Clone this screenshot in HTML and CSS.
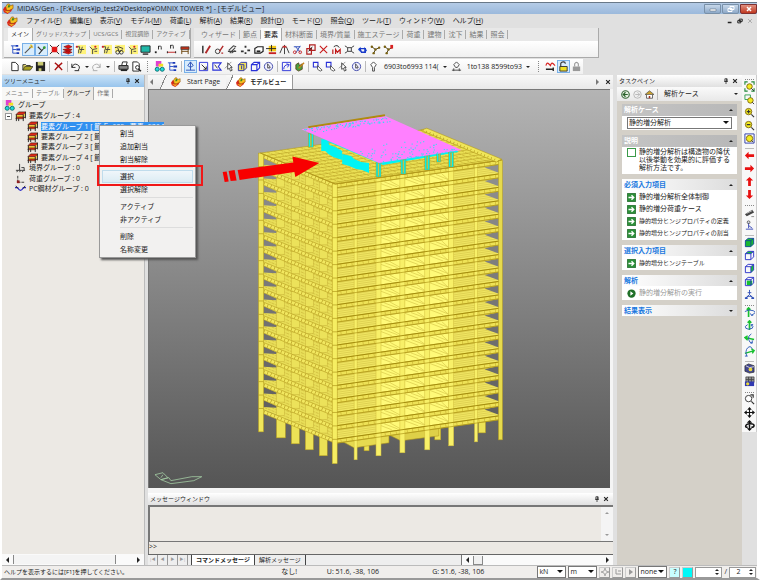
FILE: index.html
```html
<!DOCTYPE html>
<html lang="ja">
<head>
	<meta charset="UTF-8">
	<title>MIDAS/Gen</title>
	<link rel="stylesheet" href="styles.css">
</head>
<body>
<svg class="sprite" aria-hidden="true">
	<symbol id="logo" viewBox="0 0 12 12"><path d="M0 7l2-3 2 0 0 3 3-1 4-1-2 4-4 3-4-2z" fill="#d8281c"/><path d="M3 4l2-3 2 0 1 2 3-1 0 4-4 2-3 0z" fill="#f8c020" stroke="#8a4a08" stroke-width=".6"/><path d="M1 8l3 1 4 0-3 2z" fill="#f0c020"/><path d="M6 2l2 1-1 2-2 0z" fill="#3a8a20"/></symbol>
	<symbol id="pin" viewBox="0 0 8 8"><path d="M2.500 1h3v3.500h-3zM1.500 4.500h5M4 4.500V8" fill="none" stroke="#222"/><path d="M4.500 1v3" stroke="#222"/></symbol>
	<symbol id="close" viewBox="0 0 8 8"><path d="M1.500 1.500l5 5M6.500 1.500l-5 5" stroke="#222" stroke-width="1.500"/></symbol>
	<symbol id="tree" viewBox="0 0 12 12"><path d="M1 2h5M3 2v8h4M3 6h4" stroke="#2a50c8" fill="none"/><path d="M6 2h3M7 6h4M7 10h3" stroke="#1838b8" stroke-width="2"/></symbol>
	<symbol id="node" viewBox="0 0 12 12"><path d="M2 10l8-8" stroke="#555" stroke-width="1.200"/><path d="M8 1l2 1M9 4l2-1M7 3l1 1" stroke="#e8c020" stroke-width="1.500"/></symbol>
	<symbol id="elem" viewBox="0 0 12 12"><path d="M3 11l7-8M2 3l4 4" stroke="#333" stroke-width="1.200"/><circle cx="9" cy="4" r="1.500" fill="#38a038"/></symbol>
	<symbol id="redbox" viewBox="0 0 12 12"><path d="M1 1l10 10M11 1L1 11" stroke="#222"/><path d="M3 3h6v6H3z" fill="#e01818"/></symbol>
	<symbol id="redstack" viewBox="0 0 12 12"><path d="M2 3l5-2 4 2-4 2zM1 6l5-1 5 1-4 3zM1 9l5-2 5 2-4 2z" fill="#e01010" stroke="#701010" stroke-width=".6"/></symbol>
	<symbol id="yel" viewBox="0 0 12 12"><path d="M3 1h9v10H3z" fill="#fff37a"/><path d="M1 3h4v3h5M4 6v4M8 3l-2 7" stroke="#444" fill="none"/><path d="M1 2h2v2H1z" fill="#d02020"/></symbol>
	<symbol id="yel2" viewBox="0 0 12 12"><path d="M3 1h9v10H3z" fill="#fff37a"/><path d="M2 3l3 3 5-1M5 6v5M7 8h3" stroke="#444" fill="none"/><circle cx="8" cy="3" r="1.200" fill="#d02020"/></symbol>
	<symbol id="yel3" viewBox="0 0 12 12"><path d="M1 1h11v8H1z" fill="#fff37a"/><path d="M1 4l4-1 5 2M4 4l2 5 3-3" stroke="#333" fill="none"/><circle cx="4" cy="9" r="2" fill="none" stroke="#333"/><circle cx="8" cy="9" r="2" fill="none" stroke="#333"/></symbol>
	<symbol id="screen" viewBox="0 0 12 12"><path d="M1 2h10v7H1z" fill="#20b8a8" stroke="#222"/><path d="M3 11h6" stroke="#222" stroke-width="1.500"/></symbol>
	<symbol id="num" viewBox="0 0 12 12"><path d="M6 6V2M6 3q3-2 3 1v2" stroke="#222" fill="none"/><path d="M2 8h2v2H2z" fill="#222"/></symbol>
	<symbol id="num2" viewBox="0 0 12 12"><path d="M5 5V1M5 2q3-2 3 1v2" stroke="#222" fill="none"/><path d="M1 9h10" stroke="#c02020"/><path d="M1 8h1v2H1zM10 8h1v2h-1z" fill="#222"/></symbol>
	<symbol id="table" viewBox="0 0 12 12"><path d="M2 3h9v3H2z" fill="#b83018" stroke="#333" stroke-width=".7"/><path d="M3 6v5M10 6v5M3 8h7" stroke="#684008" fill="none"/></symbol>
	<symbol id="pen" viewBox="0 0 12 12"><path d="M2 2v8" stroke="#222" stroke-width="1.500"/><path d="M5 10l5-8" stroke="#b02828" stroke-width="2"/></symbol>
	<symbol id="pencil" viewBox="0 0 12 12"><circle cx="4" cy="8" r="2.500" fill="none" stroke="#333"/><path d="M6 8l4-6M8 10h2" stroke="#b02828" stroke-width="1.500"/></symbol>
	<symbol id="hatch" viewBox="0 0 12 12"><path d="M2 7l5-5 3 1M3 10l6-6M5 10l4-3M1 8h9" stroke="#444" fill="none" stroke-width="1.200"/></symbol>
	<symbol id="dots" viewBox="0 0 12 12"><path d="M1 7h3v2H1zM5 2h2v2H5zM8 6h3v2H8zM5 9h2v2H5z" fill="#333"/></symbol>
	<symbol id="box" viewBox="0 0 12 12"><path d="M2 5l3-2h6v5l-3 2H2z" fill="#fff" stroke="#222" stroke-width="1.300"/><path d="M4 7h4v2H4z" fill="#222"/></symbol>
	<symbol id="yband" viewBox="0 0 12 12"><path d="M3 2h8v6H3z" fill="#f4c818"/><path d="M0 5h11M6 1v7" stroke="#222"/><path d="M3 9h8v2H3z" fill="#c82020"/></symbol>
	<symbol id="mirror" viewBox="0 0 12 12"><path d="M6 1v10M4 3L1 10M8 3l3 7" stroke="#333"/><path d="M4 2h4v2H4z" fill="#c83030"/></symbol>
	<symbol id="scissor" viewBox="0 0 12 12"><path d="M2 3h7M9 2l-5 8M4 3l5 6" stroke="#2848b8" fill="none"/><circle cx="3" cy="9" r="1.500" fill="none" stroke="#c82828"/><circle cx="9" cy="9" r="1.500" fill="none" stroke="#c82828"/></symbol>
	<symbol id="copy" viewBox="0 0 12 12"><path d="M2 5h5v6H2zM5 1h6v6H5z" fill="none" stroke="#b02020" stroke-width="1.300"/><path d="M4 8l4-5" stroke="#222"/></symbol>
	<symbol id="cross" viewBox="0 0 12 12"><path d="M2 2l8 8M10 2l-8 8" stroke="#c81818" stroke-width="1.200"/></symbol>
	<symbol id="im" viewBox="0 0 12 12"><path d="M2 6v5M5 11V6l2 3 3-3v5" stroke="#c01818" fill="none" stroke-width="1.300"/><path d="M3 3q4-3 6 1" stroke="#222" fill="none"/></symbol>
	<symbol id="explode" viewBox="0 0 12 12"><path d="M1 2l3 2M11 2L8 4M1 10l3-2M11 10L8 8M4 4h4v4H4z" stroke="#333" fill="none"/></symbol>
	<symbol id="swap" viewBox="0 0 12 12"><path d="M1 6l3-3v6zM11 7L8 3v7z" fill="#2858d8"/><path d="M3 5h6v4H5z" fill="none" stroke="#1838c8" stroke-width="1.500"/></symbol>
	<symbol id="chain" viewBox="0 0 12 12"><path d="M2 3l4 3 4-2M6 6l-2 4" stroke="#443810" fill="none"/><circle cx="2" cy="3" r="1.300" fill="#786010"/><circle cx="6" cy="6" r="1.300" fill="#786010"/><circle cx="10" cy="4" r="1.300" fill="#786010"/><circle cx="4" cy="10" r="1.300" fill="#786010"/></symbol>
	<symbol id="chain2" viewBox="0 0 12 12"><path d="M2 3l4 3 4-2M6 6l-2 4" stroke="#443810" fill="none"/><circle cx="2" cy="3" r="1.300" fill="#786010"/><circle cx="6" cy="6" r="1.300" fill="#786010"/><circle cx="4" cy="10" r="1.300" fill="#786010"/><path d="M8 1h3v4H8z" fill="#d82020"/></symbol>
	<symbol id="file" viewBox="0 0 12 12"><path d="M3 1.500h4l3 3v6H3z" fill="#fff" stroke="#222"/></symbol>
	<symbol id="open" viewBox="0 0 12 12"><path d="M1 10V4h3l1 1h4v2" fill="#fff37a" stroke="#222"/><path d="M1 10l2-4h9l-3 4z" fill="#a8a020" stroke="#222" stroke-width=".7"/></symbol>
	<symbol id="save" viewBox="0 0 12 12"><path d="M1 1h10v10H1z" fill="#222"/><path d="M3 1h6v4H3zM4 8h3v3H4z" fill="#c8c870"/></symbol>
	<symbol id="del" viewBox="0 0 12 12"><path d="M2 2q3 2 8 8M10 2Q6 5 2 10" stroke="#a81010" fill="none" stroke-width="1.500"/></symbol>
	<symbol id="undo" viewBox="0 0 12 12"><path d="M2 3v4h4M2 7q2-5 6-3t1 6M5 10.500h5" stroke="#222" fill="none"/></symbol>
	<symbol id="redo" viewBox="0 0 12 12"><path d="M10 3v4H6M10 7Q8 2 4 4T3 10M2 10.500h5" stroke="#aaa" fill="none"/></symbol>
	<symbol id="print" viewBox="0 0 12 12"><path d="M4 5l1-4h5L9 5z" fill="#fff" stroke="#222"/><path d="M1 5h10v4H1z" fill="#888" stroke="#222"/><path d="M3 9h7v2H3z" fill="#222"/></symbol>
	<symbol id="preview" viewBox="0 0 12 12"><path d="M2 1h5l2 2v8H2z" fill="#fff" stroke="#222"/><circle cx="7" cy="7" r="2" fill="#fff" stroke="#222"/><path d="M8 9l3 2" stroke="#222" stroke-width="1.500"/></symbol>
	<symbol id="group" viewBox="0 0 12 12"><path d="M2 0h6v6H2z" fill="#e040d0"/><path d="M5 3h5v3H5z" fill="#f0e020"/><circle cx="3.500" cy="9" r="2.200" fill="#20d8d8" stroke="#087070"/><circle cx="9" cy="9" r="2.200" fill="#20d8d8" stroke="#087070"/></symbol>
	<symbol id="axis" viewBox="0 0 12 12"><path d="M6 1v9M1 10h10M3 5l3-4 3 4-3 2z" stroke="#2a50b8" fill="none"/></symbol>
	<symbol id="selwin" viewBox="0 0 12 12"><path d="M1.500 1.500h9v9h-9z" fill="none" stroke="#2830d8"/><path d="M4 4l5 5M9 6v3H6" stroke="#222" fill="none"/></symbol>
	<symbol id="selprev" viewBox="0 0 12 12"><path d="M1.500 1.500h9v9h-9z" fill="none" stroke="#2830d8"/><path d="M3 9q0-5 5-5M6 3l3 1-2 3" stroke="#2830d8" fill="none"/></symbol>
	<symbol id="selpoly" viewBox="0 0 12 12"><path d="M2 10V2h9L8 6l3 4z" fill="none" stroke="#2830d8" stroke-width="1.200"/><path d="M4 4l3 4" stroke="#333"/></symbol>
	<symbol id="arrow" viewBox="0 0 12 12"><path d="M4 2l5 5-2 0 2 3-2 1-1-3-2 1z" fill="#fff" stroke="#333" stroke-width=".9"/><path d="M1 8l7-7" stroke="#666" stroke-width=".7"/></symbol>
	<symbol id="cube" viewBox="0 0 12 12"><path d="M1.500 4l3-2.500h6v6l-3 3h-6zM1.500 4h6v6.500M7.500 4l3-2.500" fill="none" stroke="#2830d8" stroke-width="1.200"/></symbol>
	<symbol id="ycube" viewBox="0 0 12 12"><path d="M1.500 4l3-2.500h6v6l-3 3h-6z" fill="#f0e058" stroke="#2830a8"/><path d="M1.500 4h6v6M5 5v4" stroke="#2830a8" fill="none"/></symbol>
	<symbol id="globe" viewBox="0 0 12 12"><circle cx="6" cy="6" r="4.500" fill="#f0f0ff" stroke="#4048a8"/><path d="M5 3l3 4-2 0 1 2M5 3v5" fill="none" stroke="#333" stroke-width=".8"/></symbol>
	<symbol id="selarrow" viewBox="0 0 12 12"><path d="M1.500 1.500h5v5h-5z" fill="none" stroke="#2830d8" stroke-width="1.200"/><path d="M6 5l5 5-2 1-3-2z" fill="#fff" stroke="#333" stroke-width=".8"/></symbol>
	<symbol id="brush" viewBox="0 0 12 12"><path d="M2 4l3-2 1 3 3-2v6l-4 2-3-2z" fill="#48a040" stroke="#503010" stroke-width=".8"/><path d="M5 8l6-6" stroke="#c88018" stroke-width="1.500"/></symbol>
	<symbol id="bulb" viewBox="0 0 12 12"><path d="M6 1l3 3-2 3v4H5V7L3 4z" fill="#fff" stroke="#444"/></symbol>
	<symbol id="bulb2" viewBox="0 0 12 12"><path d="M6 1l3 3-2 3H5L3 4zM1 10h10M3 8v3M9 8v3" fill="none" stroke="#444"/></symbol>
	<symbol id="wave" viewBox="0 0 12 12"><path d="M1 5q1-4 3-2t2 2q1-4 3-2t2 2" stroke="#d82020" fill="none" stroke-width="1.200"/><path d="M1 9h8M9 7v4" stroke="#222" stroke-width="1.500"/></symbol>
	<symbol id="unlock" viewBox="0 0 12 12"><path d="M3 6V3q0-2 3-2 2 0 2 2" fill="none" stroke="#333" stroke-width="1.200"/><path d="M2 6h8v5H2z" fill="#f0e020" stroke="#333"/></symbol>
	<symbol id="lock" viewBox="0 0 12 12"><path d="M4 6V3q2-3 4 0v3" fill="none" stroke="#999" stroke-width="1.200"/><path d="M2 6h8v5H2z" fill="#999"/></symbol>
	<symbol id="floor" viewBox="0 0 12 12"><path d="M1 4l3-3h8L9 4z" fill="#e02818" stroke="#401808" stroke-width=".7"/><path d="M1 4.500h8v2H1zM9 4.500l3-3v2l-3 3z" fill="#f0c020"/><path d="M1 7.500l2-1h8L9 8.500H1z" fill="#e02818" stroke="#403008" stroke-width=".6"/><path d="M1.500 4v7M9 4v7M11.500 1v7M4 8v3" stroke="#222" fill="none"/></symbol>
	<symbol id="support" viewBox="0 0 12 12"><path d="M5 1v7M1 8h10M7 5h3v3M2 10l1-2M5 10l1-2M8 10l1-2" stroke="#333" fill="none"/></symbol>
	<symbol id="load" viewBox="0 0 12 12"><path d="M3 2v8M3 9h8" stroke="#333" fill="none" stroke-dasharray="3 1"/><path d="M2 7h3v3H2z" fill="#902020"/></symbol>
	<symbol id="tendon" viewBox="0 0 12 12"><path d="M0 4h3q3 6 6 0h3" stroke="#2828c8" fill="none" stroke-width="1.300"/><path d="M1 2l2 3M9 5l2-3" stroke="#222"/></symbol>
	<symbol id="zoomfit" viewBox="0 0 12 12"><path d="M1 4V1h3M8 1h3v3M11 8v3H8M4 11H1V8" stroke="#208838" fill="none" stroke-width="1.200"/><circle cx="6" cy="6" r="3" fill="#f4ec20" stroke="#806810"/><path d="M8 8l3 3" stroke="#333"/></symbol>
	<symbol id="zoomwin" viewBox="0 0 12 12"><path d="M1 1h6v5H1z" stroke="#30a050" fill="none"/><circle cx="7" cy="7" r="3" fill="#f4ec20" stroke="#806810"/><path d="M9 9l2 2" stroke="#333"/></symbol>
	<symbol id="zoomin" viewBox="0 0 12 12"><circle cx="5" cy="5" r="3.500" fill="#f4ec20" stroke="#806810"/><path d="M8 8l3 3M3 5h4M5 3v4" stroke="#333" stroke-width="1.200"/></symbol>
	<symbol id="zoomout" viewBox="0 0 12 12"><circle cx="5" cy="5" r="3.500" fill="#f4ec20" stroke="#806810"/><path d="M8 8l3 3M3 5h4" stroke="#333" stroke-width="1.200"/></symbol>
	<symbol id="zoomall" viewBox="0 0 12 12"><path d="M1 1h10v10H1z" fill="#fff" stroke="#2838a8"/><circle cx="6" cy="6" r="3.500" fill="#f4ec20" stroke="#806810"/><path d="M8 8l2 2" stroke="#333"/></symbol>
	<symbol id="left" viewBox="0 0 12 12"><path d="M1 6l4-4v2.500h6v3H5V10z" fill="#e81010"/></symbol>
	<symbol id="right" viewBox="0 0 12 12"><path d="M11 6L7 2v2.500H1v3h6V10z" fill="#e81010"/></symbol>
	<symbol id="up" viewBox="0 0 12 12"><path d="M6 1l4 4H7.500v6h-3V5H2z" fill="#e81010"/></symbol>
	<symbol id="down" viewBox="0 0 12 12"><path d="M6 11l4-4H7.500V1h-3v6H2z" fill="#e81010"/></symbol>
	<symbol id="camera" viewBox="0 0 12 12"><path d="M1 8l8-5 2 3-8 4z" fill="#444"/><path d="M3 7l6-3" stroke="#bbb"/><path d="M8 10h3v1H8z" fill="#888"/></symbol>
	<symbol id="stand" viewBox="0 0 12 12"><path d="M5 3v6M2 10h8M5 6l4 3" stroke="#3848b8" fill="none"/><circle cx="5" cy="2.500" r="1.500" fill="none" stroke="#555"/></symbol>
	<symbol id="vface" viewBox="0 0 12 12"><path d="M1.500 4l3-2.500h6v6l-3 3h-6z" fill="#18b830" stroke="#104898"/><path d="M1.500 4h6v6M7.500 4l3-2.500" stroke="#104898" fill="none"/></symbol>
	<symbol id="vtop" viewBox="0 0 12 12"><path d="M1.500 4l3-2.500h6l-3 2.500z" fill="#18c030"/><path d="M1.500 4l3-2.500h6v6l-3 3h-6zM1.500 4h6v6.500M7.500 4l3-2.500" fill="none" stroke="#2830c8"/></symbol>
	<symbol id="vside" viewBox="0 0 12 12"><path d="M7.500 4l3-2.500v6l-3 3z" fill="#18c030"/><path d="M1.500 4l3-2.500h6v6l-3 3h-6zM1.500 4h6v6.500M7.500 4l3-2.500" fill="none" stroke="#2830c8"/></symbol>
	<symbol id="vfront" viewBox="0 0 12 12"><path d="M3 5h6v5H3z" fill="#18c030"/><path d="M1.500 4l3-2.500h6v6l-3 3h-6zM1.500 4h6v6.500M7.500 4l3-2.500" fill="none" stroke="#2830c8"/></symbol>
	<symbol id="tripod" viewBox="0 0 12 12"><path d="M6 1v5M6 6l-4 4M6 6l4 4M4 4h4M3 8h6" stroke="#3050b8" fill="none"/><path d="M1 9h3v2H1zM8 9h3v2H8z" fill="#3050b8"/></symbol>
	<symbol id="rotdown" viewBox="0 0 12 12"><path d="M5 1v10M3 3l2-2 2 2" stroke="#18c030" fill="none" stroke-width="1.800"/><path d="M1 5q4-3 9-1t-2 5M7 7l1 2 2 0" stroke="#2858b8" fill="none"/></symbol>
	<symbol id="rotup" viewBox="0 0 12 12"><path d="M6 11V1M4 3l2-2 2 2" stroke="#18c030" fill="none" stroke-width="1.800"/><path d="M4 5Q0 7 2 9t7 0q2-2-1-4M8 7V5h2" stroke="#2858b8" fill="none"/></symbol>
	<symbol id="rotleft" viewBox="0 0 12 12"><path d="M1 5l10 2M4 3L1 5l3 3" stroke="#18c030" fill="none" stroke-width="1.600"/><path d="M8 1Q4 3 5 7t4 4M9 8v3H7" stroke="#2858b8" fill="none"/></symbol>
	<symbol id="rotright" viewBox="0 0 12 12"><path d="M1 8l10-3M8 3l3 2-2 3" stroke="#18c030" fill="none" stroke-width="1.600"/><path d="M3 11Q1 5 4 2t5 1M4 11H1" stroke="#2858b8" fill="none"/></symbol>
	<symbol id="render" viewBox="0 0 12 12"><path d="M1 3l4-2 6 2v7l-5 1-5-2z" fill="#444890" stroke="#222" stroke-width=".7"/><circle cx="7" cy="7" r="2" fill="#e8d838"/><path d="M2 3l4 2 5-1" stroke="#ddd" fill="none"/></symbol>
	<symbol id="render2" viewBox="0 0 12 12"><path d="M2 1h9v6H2z" fill="#999" stroke="#333" stroke-width=".7"/><path d="M5 1v6M8 1v6M2 4h9" stroke="#444"/><path d="M1 6h10v5H1z" fill="#3038b0"/><circle cx="4" cy="8.500" r="1.800" fill="#e8d838"/></symbol>
	<symbol id="magnify" viewBox="0 0 12 12"><circle cx="5" cy="5" r="3.500" fill="#fff" stroke="#333"/><path d="M8 8l3 3M7 1h3v3" stroke="#333" fill="none" stroke-width="1.300"/></symbol>
	<symbol id="move" viewBox="0 0 12 12"><path d="M6 0l2.500 3h-5zM6 12l2.500-3h-5zM0 6l3-2.500v5zM12 6L9 3.500v5z" fill="#111"/><path d="M6 2v8M2 6h8" stroke="#111" stroke-width="1.200"/></symbol>
	<symbol id="orbit" viewBox="0 0 12 12"><path d="M6 0l3 3H3zM6 12l3-3H3z" fill="#111"/><path d="M6 2v8M4 8Q1 8 2 6t5-2 4 2-3 2" stroke="#111" fill="none" stroke-width="1.600"/></symbol>
	<symbol id="go" viewBox="0 0 12 12"><path d="M.5.500h11v11H.5z" fill="#2c9038" stroke="#186020"/><path d="M2 6h7M6 3l3 3-3 3" stroke="#fff" fill="none" stroke-width="1.800"/></symbol>
	<symbol id="run" viewBox="0 0 12 12"><circle cx="6" cy="6" r="5.500" fill="#207028"/><path d="M4.500 3l4 3-4 3z" fill="#fff"/></symbol>
	<symbol id="back" viewBox="0 0 12 12"><circle cx="6" cy="6" r="5" fill="#e4efe0" stroke="#386838" stroke-width="1.500"/><path d="M9 6H3M6 3L3 6l3 3" stroke="#286028" fill="none" stroke-width="1.500"/></symbol>
	<symbol id="fwd" viewBox="0 0 12 12"><circle cx="6" cy="6" r="5" fill="#eee" stroke="#aaa"/><path d="M3 6h6M6 3l3 3-3 3" stroke="#aaa" fill="none"/></symbol>
	<symbol id="home" viewBox="0 0 12 12"><path d="M2 6v5h8V6" fill="#fff" stroke="#444"/><path d="M0 6l6-5 6 5z" fill="#c8a030" stroke="#444" stroke-width=".8"/><path d="M5 8h2v3H5z" fill="#a03020"/></symbol>
</svg>

<div class="app">
	<header class="titlebar">
		<svg class="ico"><use href="#logo"/></svg>
		<h1>MIDAS/Gen - [F:¥Users¥jp_test2¥Desktop¥OMNIX TOWER *] - [モデルビュー]</h1>
		<div class="winbtns">
			<button aria-label="最小化"><svg viewBox="0 0 8 8"><path d="M1 4h6v2H1z" fill="#fff" stroke="#567" stroke-width=".5"/></svg></button>
			<button aria-label="元に戻す"><svg viewBox="0 0 8 8"><path d="M3 1.500h4v3H3zM1 3.500h4v3H1z" fill="none" stroke="#fff"/></svg></button>
			<button class="exit" aria-label="閉じる"><svg viewBox="0 0 8 8"><path d="M2 2l4 4M6 2L2 6" stroke="#fff" stroke-width="1.500"/></svg></button>
		</div>
	</header>

	<nav class="menubar">
		<svg class="ico"><use href="#logo"/></svg>
		<button>ファイル(<u>F</u>)</button>
		<button>編集(<u>E</u>)</button>
		<button>表示(<u>V</u>)</button>
		<button>モデル(<u>M</u>)</button>
		<button>荷重(<u>L</u>)</button>
		<button>解析(<u>A</u>)</button>
		<button>結果(<u>R</u>)</button>
		<button>設計(<u>D</u>)</button>
		<button>モード(<u>O</u>)</button>
		<button>照会(<u>Q</u>)</button>
		<button>ツール(<u>T</u>)</button>
		<button>ウィンドウ(<u>W</u>)</button>
		<button>ヘルプ(<u>H</u>)</button>
		<div class="mdi">
			<svg viewBox="0 0 8 8"><path d="M1 6h5" stroke="#222" stroke-width="2"/></svg>
			<svg viewBox="0 0 8 8"><path d="M3 1.500h4v3H3zM1 3.500h4v3H1z" fill="none" stroke="#222" stroke-width="1.300"/></svg>
			<svg viewBox="0 0 8 8"><path d="M1.500 1.500l5 5M6.500 1.500l-5 5" stroke="#999"/></svg>
		</div>
	</nav>

	<div class="ribbon">
		<section class="band">
			<div class="tabs compact">
				<button class="on">メイン</button><button>グリッド/スナップ</button><button>UCS/GCS</button><button>視覚調節</button><button>アクティブ</button>
			</div>
			<div class="tools">
				<button class="tool" aria-label="ツリー"><svg class="ico"><use href="#tree"/></svg></button>
				<button class="tool on" aria-label="節点"><svg class="ico"><use href="#node"/></svg></button>
				<button class="tool on" aria-label="要素"><svg class="ico"><use href="#elem"/></svg></button>
				<button class="tool" aria-label="全選択"><svg class="ico"><use href="#redbox"/></svg></button>
				<button class="tool on" aria-label="積層"><svg class="ico"><use href="#redstack"/></svg></button>
				<button class="tool" aria-label="境界"><svg class="ico"><use href="#yel"/></svg></button>
				<button class="tool" aria-label="リンク"><svg class="ico"><use href="#yel2"/></svg></button>
				<button class="tool" aria-label="荷重"><svg class="ico"><use href="#yel"/></svg></button>
				<button class="tool" aria-label="検索"><svg class="ico"><use href="#yel3"/></svg></button>
				<button class="tool" aria-label="質量"><svg class="ico"><use href="#yel2"/></svg></button>
				<button class="tool" aria-label="画面"><svg class="ico"><use href="#screen"/></svg></button>
				<button class="tool" aria-label="節点番号"><svg class="ico"><use href="#num"/></svg></button>
				<button class="tool" aria-label="要素番号"><svg class="ico"><use href="#num2"/></svg></button>
				<button class="tool" aria-label="テーブル"><svg class="ico"><use href="#table"/></svg></button>
			</div>
		</section>
		<section class="band wide">
			<div class="tabs">
				<button>ウィザード</button><button>節点</button><button class="on">要素</button><button>材料断面</button><button>境界/質量</button><button>施工ステージ</button><button>荷重</button><button>建物</button><button>沈下</button><button>結果</button><button>照会</button>
			</div>
			<div class="tools">
				<button class="tool" aria-label="作成"><svg class="ico"><use href="#pen"/></svg></button>
				<button class="tool" aria-label="曲線"><svg class="ico"><use href="#pencil"/></svg></button>
				<button class="tool" aria-label="細分"><svg class="ico"><use href="#hatch"/></svg></button>
				<button class="tool" aria-label="配置"><svg class="ico"><use href="#dots"/></svg></button>
				<button class="tool" aria-label="押出"><svg class="ico"><use href="#box"/></svg></button>
				<button class="tool" aria-label="移動"><svg class="ico"><use href="#yband"/></svg></button>
				<button class="tool" aria-label="対称"><svg class="ico"><use href="#mirror"/></svg></button>
				<button class="tool" aria-label="分割"><svg class="ico"><use href="#scissor"/></svg></button>
				<button class="tool" aria-label="複写"><svg class="ico"><use href="#copy"/></svg></button>
				<button class="tool" aria-label="削除"><svg class="ico"><use href="#cross"/></svg></button>
				<button class="tool" aria-label="結合"><svg class="ico"><use href="#im"/></svg></button>
				<button class="tool" aria-label="交差"><svg class="ico"><use href="#explode"/></svg></button>
				<button class="tool" aria-label="変更"><svg class="ico"><use href="#swap"/></svg></button>
				<button class="tool" aria-label="連結"><svg class="ico"><use href="#chain"/></svg></button>
				<button class="tool" aria-label="再番号"><svg class="ico"><use href="#chain2"/></svg></button>
			</div>
		</section>
	</div>

	<div class="toolbar">
		<button class="tool" aria-label="新規"><svg class="ico"><use href="#file"/></svg></button>
		<button class="tool" aria-label="開く"><svg class="ico"><use href="#open"/></svg></button>
		<button class="tool" aria-label="保存"><svg class="ico"><use href="#save"/></svg></button>
		<i class="sep"></i>
		<button class="tool" aria-label="消去"><svg class="ico"><use href="#del"/></svg></button>
		<i class="sep"></i>
		<button class="tool drop" aria-label="元に戻す"><svg class="ico"><use href="#undo"/></svg></button>
		<button class="tool drop" aria-label="やり直し"><svg class="ico"><use href="#redo"/></svg></button>
		<i class="sep"></i>
		<button class="tool" aria-label="印刷"><svg class="ico"><use href="#print"/></svg></button>
		<button class="tool" aria-label="プレビュー"><svg class="ico"><use href="#preview"/></svg></button>
		<i class="grip"></i>
		<button class="tool" aria-label="グループ"><svg class="ico"><use href="#group"/></svg></button>
		<button class="tool" aria-label="ワークツリー"><svg class="ico"><use href="#tree"/></svg></button>
		<i class="sep"></i>
		<button class="tool on" aria-label="単一選択"><svg class="ico"><use href="#axis"/></svg></button>
		<button class="tool" aria-label="窓選択"><svg class="ico"><use href="#selwin"/></svg></button>
		<button class="tool" aria-label="多角形選択"><svg class="ico"><use href="#selpoly"/></svg></button>
		<button class="tool" aria-label="交差選択"><svg class="ico"><use href="#arrow"/></svg></button>
		<button class="tool" aria-label="面選択"><svg class="ico"><use href="#ycube"/></svg></button>
		<button class="tool" aria-label="体積選択"><svg class="ico"><use href="#cube"/></svg></button>
		<button class="tool" aria-label="全体"><svg class="ico"><use href="#globe"/></svg></button>
		<i class="sep"></i>
		<button class="tool" aria-label="前選択"><svg class="ico"><use href="#selprev"/></svg></button>
		<button class="tool" aria-label="塗り"><svg class="ico"><use href="#brush"/></svg></button>
		<i class="sep"></i>
		<button class="tool" aria-label="解除"><svg class="ico"><use href="#selarrow"/></svg></button>
		<button class="tool" aria-label="窓解除"><svg class="ico"><use href="#selarrow"/></svg></button>
		<button class="tool" aria-label="交差解除"><svg class="ico"><use href="#arrow"/></svg></button>
		<button class="tool" aria-label="全解除"><svg class="ico"><use href="#globe"/></svg></button>
		<i class="sep"></i>
		<svg class="ico"><use href="#bulb"/></svg>
		<button class="ids">6903to6993 114(</button>
		<svg class="ico"><use href="#bulb2"/></svg>
		<button class="ids">1to138 8599to93</button>
		<i class="grip"></i>
		<button class="tool" aria-label="波形"><svg class="ico"><use href="#wave"/></svg></button>
		<button class="tool on" aria-label="解除状態"><svg class="ico"><use href="#unlock"/></svg></button>
		<button class="tool" aria-label="ロック"><svg class="ico"><use href="#lock"/></svg></button>
	</div>

	<main class="work">
		<aside class="side">
			<div class="cap blue">ツリーメニュー<svg><use href="#pin"/></svg><svg><use href="#close"/></svg></div>
			<div class="tabs tree-tabs"><button>メニュー</button><button>テーブル</button><button class="on">グループ</button><button>作業</button></div>
			<ul class="tree">
				<li><svg class="ico"><use href="#group"/></svg>グループ</li>
				<li><i class="minus"></i><svg class="ico"><use href="#floor"/></svg>要素グループ : 4</li>
				<li class="sub"><svg class="ico"><use href="#floor"/></svg><span class="picked">要素グループ 1 [ 節点=639 ; 要素=936 ]</span></li>
				<li class="sub"><svg class="ico"><use href="#floor"/></svg>要素グループ 2 [ 節点</li>
				<li class="sub"><svg class="ico"><use href="#floor"/></svg>要素グループ 3 [ 節点</li>
				<li class="sub"><svg class="ico"><use href="#floor"/></svg>要素グループ 4 [ 節点</li>
				<li class="leaf"><svg class="ico"><use href="#support"/></svg>境界グループ : 0</li>
				<li class="leaf"><svg class="ico"><use href="#load"/></svg>荷重グループ : 0</li>
				<li class="leaf"><svg class="ico"><use href="#tendon"/></svg>PC鋼材グループ : 0</li>
			</ul>
			<div class="hscroll"><i class="al"></i><i class="thumb"></i><i class="ar"></i></div>

			<div class="popup">
				<button>割当</button>
				<button>追加割当</button>
				<button>割当解除</button>
				<hr>
				<button class="hover">選択</button>
				<button>選択解除</button>
				<hr>
				<button>アクティブ</button>
				<button>非アクティブ</button>
				<hr>
				<button>削除</button>
				<button>名称変更</button>
				<div class="frame"></div>
			</div>
		</aside>

		<section class="center">
			<div class="doctabs">
				<i class="al hollow"></i>
				<button><svg class="ico"><use href="#logo"/></svg>Start Page</button>
				<button class="on"><svg class="ico"><use href="#logo"/></svg>モデルビュー</button>
				<div class="right"><i class="ar hollow"></i><svg><use href="#close"/></svg></div>
			</div>
			<div class="view">
				<svg id="model" viewBox="149 89 463 397" preserveAspectRatio="xMidYMid meet"></svg>
			</div>
			<div class="cap grey">メッセージウィンドウ<svg><use href="#pin"/></svg><svg><use href="#close"/></svg></div>
			<div class="log"><i class="au"></i><i class="ad"></i></div>
			<div class="cmd">&gt;&gt;</div>
			<div class="sheets">
				<div class="steps"><button>|◀</button><button>◀</button><button>▶</button><button>▶|</button></div>
				<button class="sheet on">コマンドメッセージ</button>
				<button class="sheet">解析メッセージ</button>
				<div class="hscroll"><i class="al"></i><i class="knob"></i><i class="ar"></i></div>
			</div>
		</section>

		<aside class="task">
			<div class="cap grey">タスクペイン<svg><use href="#pin"/></svg><svg><use href="#close"/></svg></div>
			<div class="tasknav">
				<button class="tool" aria-label="戻る"><svg class="ico"><use href="#back"/></svg></button>
				<button class="tool" aria-label="進む"><svg class="ico"><use href="#fwd"/></svg></button>
				<button class="tool" aria-label="ホーム"><svg class="ico"><use href="#home"/></svg></button>
				<i class="sep"></i>
				<span>解析ケース</span><i class="ad"></i>
			</div>
			<div class="panels">
				<section class="panel">
					<h2 class="dim"><label for="case">解析ケース</label><i class="au"></i></h2>
					<div class="body"><span class="combo"><select id="case"><option>静的増分解析</option></select></span></div>
				</section>
				<section class="panel">
					<h2 class="dim">説明<i class="au"></i></h2>
					<div class="body note"><i class="square"></i><p>静的増分解析は構造物の降伏以後挙動を効果的に評価する解析方法です。</p></div>
				</section>
				<section class="panel">
					<h2>必須入力項目<i class="au"></i></h2>
					<div class="body">
						<a href="#"><svg><use href="#go"/></svg>静的増分解析全体制御</a>
						<a href="#"><svg><use href="#go"/></svg>静的増分荷重ケース</a>
						<a href="#" class="long"><svg><use href="#go"/></svg>静的増分ヒンジプロパティの定義</a>
						<a href="#" class="long"><svg><use href="#go"/></svg>静的増分ヒンジプロパティの割当</a>
					</div>
				</section>
				<section class="panel">
					<h2>選択入力項目<i class="au"></i></h2>
					<div class="body"><a href="#" class="long"><svg><use href="#go"/></svg>静的増分ヒンジテーブル</a></div>
				</section>
				<section class="panel">
					<h2>解析<i class="au"></i></h2>
					<div class="body"><a href="#" class="off"><svg><use href="#run"/></svg>静的増分解析の実行</a></div>
				</section>
				<section class="panel">
					<h2>結果表示<i class="ad"></i></h2>
				</section>
			</div>
		</aside>

		<div class="strip">
			<div class="vtools">
				<i class="hgrip"></i>
				<button class="tool" aria-label="全体表示"><svg class="ico"><use href="#zoomfit"/></svg></button>
				<button class="tool" aria-label="窓ズーム"><svg class="ico"><use href="#zoomwin"/></svg></button>
				<button class="tool" aria-label="拡大"><svg class="ico"><use href="#zoomin"/></svg></button>
				<button class="tool" aria-label="縮小"><svg class="ico"><use href="#zoomout"/></svg></button>
				<button class="tool" aria-label="自動"><svg class="ico"><use href="#zoomall"/></svg></button>
				<i class="hsep"></i>
				<button class="tool" aria-label="左"><svg class="ico"><use href="#left"/></svg></button>
				<button class="tool" aria-label="右"><svg class="ico"><use href="#right"/></svg></button>
				<button class="tool" aria-label="上"><svg class="ico"><use href="#up"/></svg></button>
				<button class="tool" aria-label="下"><svg class="ico"><use href="#down"/></svg></button>
				<i class="hgrip"></i>
				<button class="tool" aria-label="視点"><svg class="ico"><use href="#camera"/></svg></button>
				<button class="tool" aria-label="角度"><svg class="ico"><use href="#stand"/></svg></button>
				<i class="hsep"></i>
				<button class="tool" aria-label="等角"><svg class="ico"><use href="#vface"/></svg></button>
				<button class="tool" aria-label="上面"><svg class="ico"><use href="#vtop"/></svg></button>
				<button class="tool" aria-label="側面"><svg class="ico"><use href="#vside"/></svg></button>
				<button class="tool" aria-label="正面"><svg class="ico"><use href="#vfront"/></svg></button>
				<button class="tool" aria-label="三脚"><svg class="ico"><use href="#tripod"/></svg></button>
				<i class="hgrip"></i>
				<button class="tool" aria-label="左回転"><svg class="ico"><use href="#rotdown"/></svg></button>
				<button class="tool" aria-label="右回転"><svg class="ico"><use href="#rotup"/></svg></button>
				<button class="tool" aria-label="上回転"><svg class="ico"><use href="#rotleft"/></svg></button>
				<button class="tool" aria-label="下回転"><svg class="ico"><use href="#rotright"/></svg></button>
				<i class="hsep"></i>
				<button class="tool" aria-label="レンダリング"><svg class="ico"><use href="#render"/></svg></button>
				<button class="tool" aria-label="陰影"><svg class="ico"><use href="#render2"/></svg></button>
				<i class="hgrip"></i>
				<button class="tool" aria-label="動的ズーム"><svg class="ico"><use href="#magnify"/></svg></button>
				<button class="tool" aria-label="動的移動"><svg class="ico"><use href="#move"/></svg></button>
				<button class="tool" aria-label="動的回転"><svg class="ico"><use href="#orbit"/></svg></button>
			</div>
		</div>
	</main>

	<footer class="status">
		<span class="help">ヘルプを表示するには[F1]を押してください。</span>
		<span class="none">なし!</span>
		<span class="pos">U: 51.6, -38, 106</span>
		<span class="pos">G: 51.6, -38, 106</span>
		<div class="units">
			<span class="combo"><select aria-label="力"><option>kN</option></select></span>
			<span class="combo"><select aria-label="長さ"><option>m</option></select></span>
			<button class="mini" aria-label="スナップ"><svg viewBox="0 0 8 8"><path d="M4 0l1 3 3 1-3 1-1 3-1-3-3-1 3-1z" fill="none" stroke="#999" stroke-width=".8"/></svg></button>
			<button class="mini" aria-label="座標"><svg viewBox="0 0 8 8"><path d="M2 1v5h5M4 3h3" stroke="#999" fill="none"/></svg></button>
			<button class="mini" aria-label="実行"><svg viewBox="0 0 8 8"><path d="M2 1l4 3-4 3z" fill="#999"/></svg></button>
			<span class="combo"><select aria-label="選択"><option>none</option></select></span>
			<button class="mini ask">?</button>
			<button class="mini cyan" aria-label="色"></button>
			<span class="spin"><input type="text" aria-label="ページ"><i class="au"></i><i class="ad"></i></span>
			<span>/</span>
			<span class="spin"><input type="text" value="2" aria-label="総数"><i class="au"></i><i class="ad"></i></span>
		</div>
	</footer>
</div>
<script src="tower.js"></script>
</body>
</html>
```

FILE: styles.css
```css
*{
	margin: 0;
	padding: 0;
	box-sizing: border-box;
}
body{
	background: #fff;
	color: #222;
	font-family: "Open Sans", "Noto Sans CJK JP", sans-serif;
	font-size: 7px;
	line-height: 10px;
}
button, input, select{
	font: inherit;
	color: inherit;
	background: none;
	border: 0;
	border-radius: 0;
	white-space: nowrap;
}
a{
	color: inherit;
	text-decoration: none;
}
ul{
	list-style: none;
}
.sprite{
	display: none;
}
.app{
	display: flex;
	flex-direction: column;
	height: 100vh;
	background: #e0e0e0;
	border: solid #fff;
	border-width: 2px 3px 2px 2px;
	border-bottom-color: #999;
}
.ico{
	flex: none;
	width: 11px;
	height: 11px;
}

/* small triangles */
.au, .ad, .al, .ar{
	flex: none;
	display: block;
	width: 0;
	height: 0;
	border: 2px solid transparent;
}
.au{ border-top-width: 0; border-bottom-color: #222; }
.ad{ border-bottom-width: 0; border-top-color: #222; }
.al{ border-width: 3px 3px 3px 0; border-right-color: #222; }
.ar{ border-width: 3px 0 3px 3px; border-left-color: #222; }
.al.hollow{ border-right-color: #777; }
.ar.hollow{ border-left-color: #777; }

.titlebar{
	display: flex;
	align-items: center;
	gap: 3px;
	height: 12px;
	padding-left: 1px;
	background: linear-gradient(#b4cbe6, #9bb9dc);
	border-top: 1px solid #687888;
}
.titlebar h1{
	font-size: 7px;
	font-weight: normal;
}
.winbtns{
	display: flex;
	gap: 1px;
	height: 10px;
	margin-left: auto;
}
.winbtns button{
	width: 17px;
	border: 1px solid #7890a8;
	border-radius: 0 0 2px 2px;
	background: linear-gradient(#c8d8ea, #8ca8c8);
	line-height: 0;
}
.winbtns .exit{
	border-color: #803030;
	background: linear-gradient(#e09080, #c03820);
}
.winbtns svg{
	width: 8px;
	height: 8px;
}

.menubar{
	display: flex;
	align-items: center;
	gap: 8px;
	height: 14px;
	padding: 0 4px 0 5px;
}
.mdi{
	display: flex;
	gap: 4px;
	margin-left: auto;
}
.mdi svg{
	width: 6px;
	height: 6px;
}

.ribbon{
	display: flex;
	gap: 3px;
	height: 30px;
	padding-left: 2px;
}
.band{
	width: 187px;
	background: #f8f8f8;
	border-right: 1px solid #aaa;
	border-bottom: 1px solid #aaa;
}
.band.wide{
	width: 405px;
}
.tabs{
	display: flex;
	align-items: center;
	height: 13px;
	background: #e8e8e8;
	color: #777;
}
.tabs button{
	padding: 0 3px;
	border-right: 1px solid #aaa;
	line-height: 9px;
}
.tabs .on{
	height: 13px;
	background: #fafafa;
	color: #111;
}
.compact{
	padding-left: 4px;
	font-size: 6px;
}
.wide .tabs{
	padding-left: 4px;
}
.tools{
	display: flex;
	align-items: center;
	height: 16px;
	padding-left: 5px;
	background: linear-gradient(#fff, #f0f0f0);
}
.wide .tools{
	padding-left: 6px;
}
.tool{
	flex: none;
	display: flex;
	align-items: center;
	justify-content: center;
	width: 13px;
	height: 13px;
}
.tool.on{
	background: #d8ecfc;
	border: 1px solid #78b0e8;
}
.toolbar{
	align-self: flex-start;
	display: flex;
	align-items: center;
	height: 15px;
	margin: 1px 0;
	padding-left: 6px;
	background: linear-gradient(#fff, #f0f0f0);
}
.drop{
	position: relative;
	width: 21px;
	justify-content: flex-start;
}
.drop::after, .ids::after{
	content: "";
	display: inline-block;
	margin-left: 4px;
	border: 2px solid transparent;
	border-top-color: #222;
	border-bottom: 0;
	vertical-align: middle;
}
.ids{
	padding: 0 4px 0 5px;
}
.sep{
	flex: none;
	width: 1px;
	height: 11px;
	margin: 0 2px;
	background: #bbb;
}
.grip{
	flex: none;
	width: 2px;
	height: 11px;
	margin: 0 4px;
	border-left: 1px dotted #888;
}

.work{
	flex: 1;
	display: flex;
	min-height: 0;
}
.side{
	position: relative;
	display: flex;
	flex-direction: column;
	width: 143px;
	background: #ece9e4;
	border-right: 1px solid #bbb;
}
.cap{
	flex: none;
	display: flex;
	align-items: center;
	gap: 3px;
	height: 12px;
	padding: 0 4px 0 2px;
	font-size: 6px;
}
.cap svg{
	width: 6px;
	height: 6px;
}
.cap svg:first-of-type{
	margin-left: auto;
}
.blue{
	background: linear-gradient(#c8e2f8, #98c4ec);
}
.grey{
	background: linear-gradient(#fff, #e0e0e0);
}
.tree-tabs{
	flex: none;
	background: #f8f8f6;
	font-size: 6px;
}
.tree-tabs .on{
	background: #ece9e4;
}
.tree{
	flex: 1;
}
.tree li{
	display: flex;
	align-items: center;
	gap: 3px;
	height: 10px;
	padding-left: 2px;
	margin-bottom: 1px;
	white-space: nowrap;
}
.tree li:nth-child(2n){
	margin-bottom: 0;
}
.tree .sub{
	padding-left: 25px;
}
.tree .leaf{
	padding-left: 13px;
}
.minus{
	width: 7px;
	height: 7px;
	margin-left: 1px;
	border: 1px solid #999;
	background: linear-gradient(#444, #444) center / 3px 1px no-repeat #fff;
}
.picked{
	background: #3090f0;
	color: #fff;
	line-height: 9px;
}
.hscroll{
	display: flex;
	align-items: center;
	height: 11px;
	padding: 0 4px;
	background: #fafafa;
}
.thumb{
	width: 103px;
	height: 9px;
	margin: 0 auto 0 4px;
	background: #f4f4f4;
	border: solid #888;
	border-width: 0 1px;
}

.popup{
	position: absolute;
	left: 97px;
	top: 50px;
	z-index: 2;
	width: 97px;
	padding: 1px 2px;
	background: #f2f1f0;
	border: 1px solid #999;
	box-shadow: 2px 2px 2px #555;
}
.popup button{
	display: block;
	width: 100%;
	height: 13px;
	padding-left: 18px;
	text-align: left;
}
.popup .hover{
	background: linear-gradient(#f0f6fa, #dcecf4);
	border: 1px solid #c0dcec;
	padding-left: 17px;
}
.popup hr{
	height: 1px;
	margin: 1px 0 2px 18px;
	border: 0;
	background: #ddd;
}
.frame{
	position: absolute;
	left: -3px;
	top: 39px;
	width: 106px;
	height: 21px;
	border: 2px solid #f01818;
}

.center{
	flex: 1;
	display: flex;
	flex-direction: column;
	min-width: 0;
	margin: 0 4px 0 3px;
	background: #f4f4f4;
}
.doctabs{
	flex: none;
	display: flex;
	align-items: center;
	height: 14px;
	padding-left: 2px;
	background: linear-gradient(#f8f8f8, #e8e8e8);
}
.doctabs button{
	display: flex;
	align-items: center;
	gap: 6px;
	height: 14px;
	padding: 0 6px 0 15px;
	background: linear-gradient(115deg, transparent 9px, #888 9px, #888 10px, #f4f4f4 10px);
}
.doctabs .ico{
	width: 10px;
	height: 10px;
}
.doctabs button:first-of-type{
	margin-left: 3px;
}
.doctabs .on{
	padding-left: 10px;
	gap: 4px;
	border-right: 1px solid #999;
	background: linear-gradient(115deg, transparent 6px, #888 6px, #888 7px, #fff 7px);
	font-weight: bold;
	font-size: 6px;
}
.right{
	display: flex;
	gap: 6px;
	margin-left: auto;
	padding-right: 2px;
}
.right svg{
	width: 6px;
	height: 6px;
}
.view{
	flex: 1;
	min-height: 0;
	margin-right: 3px;
	border-top: 1px solid #777;
	border-left: 1px solid #777;
	background: linear-gradient(#b4b4b4, #555);
}
#model{
	display: block;
	width: 100%;
	height: 100%;
	overflow: visible;
}
.center .cap{
	margin-top: 5px;
}
.log{
	flex: none;
	display: flex;
	flex-direction: column;
	justify-content: space-between;
	align-items: flex-end;
	height: 37px;
	padding: 5px 4px;
	background: linear-gradient(#f4f4f4, #f4f4f4) right / 12px 100% no-repeat #ece9e4;
	border: 2px solid #777;
	border-right: 0;
	border-bottom-width: 1px;
}
.log .au{ border-bottom-color: #999; }
.log .ad{ border-top-color: #999; }
.cmd{
	flex: none;
	height: 12px;
	border-left: 1px solid #777;
	background: #ece9e4;
}
.sheets{
	flex: none;
	display: flex;
	height: 11px;
	font-size: 6px;
	background: #eee;
	border-top: 1px solid #666;
}
.steps{
	display: flex;
	margin-right: 3px;
}
.steps button{
	width: 10px;
	border-right: 1px solid #999;
	color: #999;
	font-size: 4px;
}
.sheet{
	padding: 0 4px;
	border-right: 1px solid #444;
}
.sheet.on{
	background: #fff;
	font-weight: bold;
	border-left: 1px solid #444;
}
.sheets .hscroll{
	width: 152px;
	margin-left: auto;
	height: 10px;
	border-left: 1px solid #777;
}
.knob{
	width: 10px;
	height: 9px;
	margin: 0 auto 0 4px;
	background: #f0f0f0;
	border: solid #888;
	border-width: 0 1px 1px 1px;
}

.task{
	display: flex;
	flex-direction: column;
	width: 125px;
	background: #d4d0c8;
}
.tasknav{
	flex: none;
	display: flex;
	align-items: center;
	height: 14px;
	padding: 0 4px 0 2px;
	background: linear-gradient(#fafafa, #e8e8e8);
}
.tasknav .tool{
	width: 12px;
}
.tasknav .ico{
	width: 9px;
	height: 9px;
}
.tasknav span{
	margin: 0 auto 0 4px;
}
.panels{
	display: flex;
	flex-direction: column;
	gap: 5px;
	padding: 3px 5px;
}
.panel h2{
	display: flex;
	align-items: center;
	height: 11px;
	padding: 0 4px 0 2px;
	background: linear-gradient(90deg, #fff, #dcdcdc);
	color: #1878e0;
	font-size: 7px;
}
.panel h2.dim{
	background: linear-gradient(90deg, #c4c4c4, #b8b8b8);
	color: #fff;
	height: 12px;
}
.panel h2 i{
	margin-left: auto;
}
.body{
	padding: 1px 5px;
	background: #fff;
}
.combo{
	position: relative;
	display: block;
	height: 12px;
	background: #fff;
	border: 1px solid #777;
}
.combo select{
	display: block;
	width: 100%;
	height: 10px;
	padding-left: 1px;
	appearance: none;
}
.combo::after{
	content: "";
	position: absolute;
	right: 2px;
	top: 3px;
	border: 3px solid transparent;
	border-top-color: #111;
	border-bottom: 0;
	pointer-events: none;
}
.note{
	display: flex;
	gap: 3px;
}
.note p{
	flex: 1;
	line-height: 8px;
	margin: 0 -2px 1px 0;
}
.square{
	width: 9px;
	height: 9px;
	border: 1px solid #3a9a48;
}
.body a{
	display: flex;
	align-items: center;
	gap: 3px;
	height: 12px;
	white-space: nowrap;
}
.body a svg{
	flex: none;
	width: 9px;
	height: 9px;
}
.body .long{
	font-size: 6px;
}
.body .off{
	color: #999;
}

.strip{
	flex: none;
	width: 15px;
}
.vtools{
	display: flex;
	flex-direction: column;
	align-items: center;
	background: #f8f8f8;
	border-right: 1px solid #ccc;
}
.hgrip{
	width: 9px;
	height: 5px;
	border-bottom: 1px dotted #888;
}
.hsep{
	width: 9px;
	height: 4px;
	border-bottom: 1px solid #bbb;
}

.status{
	flex: none;
	display: flex;
	align-items: center;
	height: 13px;
	padding-left: 2px;
	background: #f0eeec;
	border-top: 1px solid #bbb;
	white-space: nowrap;
}
.help{
	flex: 0 1 279px;
	font-size: 6px;
}
.none{
	width: 46px;
}
.pos{
	width: 106px;
}
.units{
	display: flex;
	align-items: center;
	gap: 2px;
	margin-left: auto;
	padding-right: 1px;
}
.units .combo{
	width: 29px;
}
.mini{
	display: flex;
	align-items: center;
	justify-content: center;
	width: 11px;
	height: 11px;
	border: 1px solid #ccc;
	border-right-color: #999;
	border-bottom-color: #999;
}
.mini svg{
	width: 8px;
	height: 8px;
}
.ask{
	background: #c8ffff;
}
.cyan{
	background: #00f8f8;
}
.spin{
	display: grid;
	grid-template-columns: 1fr 8px;
	align-items: center;
	justify-items: center;
	width: 27px;
	height: 11px;
	border: 1px solid #999;
	background: #fff;
}
.spin input{
	grid-row: 1 / 3;
	width: 100%;
	height: 9px;
	text-align: center;
}
```

FILE: tower.js
```javascript
let model=document.getElementById('model'),
	out=[],
	floors=19,
	step=13.5,
	dark='#b39a1c',
	L=[261,151],
	F=[336,182],
	R=[503,158],
	B=[428,127];

function poly(pts,fill,stroke){
	out.push(`<polygon points="${pts.join(' ')}" fill="${fill}" stroke="${stroke||'none'}" stroke-width=".6"/>`);
}
function line(a,b,color,w,dash){
	out.push(`<path d="M${a}L${b}" stroke="${color}" stroke-width="${w}" ${dash?`stroke-dasharray="${dash}"`:''} fill="none"/>`);
}
// point between a and b, moved down by dy
function mix(a,b,t,dy){
	return [a[0]+(b[0]-a[0])*t, a[1]+(b[1]-a[1])*t+(dy||0)];
}
function bar(x,y1,y2,w,fill,edge){
	out.push(`<rect x="${x}" y="${y1}" width="${w}" height="${y2-y1}" fill="${fill}" stroke="${edge||dark}" stroke-width=".5"/>`);
}
let drop=floors*step;

// feet under the last floor
[[277,437,9],[292,443,8],[306,449,8],[320,455,8]].forEach(c=>bar(c[0],400,c[1],c[2],'#ece256'));
[[365,450,5],[436,439,6],[480,432,7]].forEach(c=>bar(c[0],410,c[1],c[2],'#ece256'));
poly([[342,440],[355,447],[390,442],[390,430]],'#e6da50',dark);
poly([[390,434],[402,440],[440,435],[440,425]],'#ded048',dark);

// faces
poly([L,F,mix(F,F,0,drop),mix(L,L,0,drop)],'#e8de58');
poly([F,R,mix(R,R,0,drop),mix(F,F,0,drop)],'#f0e662');
for(let i=0;i<floors;i++){
	let y=i*step;
	for(let k=5;k<13;k+=3){
		line(mix(L,F,0,y+k),mix(L,F,1,y+k),'#c8b236',.6,'3 1');
	}
	for(let k=5;k<13;k+=2){
		line(mix(F,R,0,y+k),mix(F,R,1,y+k),'#cebc40',.5);
	}
	// open slabs in the middle bays
	[[.26,.39],[.42,.54],[.57,.68]].forEach(b=>{
		poly([mix(F,R,b[0],y+4),mix(F,R,b[1],y+4),mix(F,R,b[1],y+13),mix(F,R,b[0],y+13)],'#fffa78');
		for(let t=b[0];t<b[1]-.03;t+=.035){
			line(mix(F,R,t,y+5),mix(F,R,Math.min(t+.08,b[1]),y+12),'#c8b438',.5);
		}
	});
	// gaps that let the background through
	let g=Math.round(144-i*2.600),
		grey=`rgb(${g},${g},${g})`;
	poly([[264,156+y],[281,164+y],[264,163+y]],grey);
	poly([[501,162+y],[501,171+y],[486,165.500+y]],grey);
	[277,292,306,320].forEach(x=>{
		let y0=L[1]+(x-L[0])*.41+y+5;
		bar(x,y0,y0+9,8,'#ece25a','#c8b438');
	});
}
for(let i=0;i<=floors;i++){
	let y=i*step;
	poly([mix(L,F,0,y),mix(L,F,1,y),mix(L,F,1,y+4),mix(L,F,0,y+4)],'#f2e860',dark);
	line(mix(L,F,0,y+2),mix(L,F,1,y+2),'#b8a024',3,'.7 3');
	poly([mix(F,R,0,y),mix(F,R,1,y),mix(F,R,1,y+4),mix(F,R,0,y+4)],'#eee256',dark);
	line(mix(F,R,0,y+2),mix(F,R,1,y+2),'#c8b030',3,'.6 5');
}
[[355,459,3],[377,455,5],[401,452,5],[426,449,5],[450,445,5],[476,441,3]].forEach(c=>{
	bar(c[0],F[1]-(c[0]-F[0])*.144,c[1],c[2],'#f8f068','#d0bc3c');
});
for(let i=0;i<=floors;i++){
	let y=i*step;
	line(mix(F,R,0,y+4),mix(F,R,1,y+4),'#b09818',.7);
	line(mix(F,R,0,y),mix(F,R,1,y),'#a08808',.9);
}
bar(259,151,431,5,'#f0e65a');
bar(333,182,463,5,'#f6ee62');
bar(500,158,439,4,'#e6da4c');
for(let i=1;i<=floors;i++){
	let y=i*step;
	line([333,182+y],[338,182+y],dark,.7);
	line([259,151+y],[264,151+y],dark,.7);
}

// roof
poly([L,F,R,B],'#eadf54',dark);
for(let t=.08;t<1;t+=.08){
	line(mix(L,F,t),mix(B,R,t),'#b8a024',.6);
}
for(let t=.04;t<1;t+=.04){
	line(mix(L,B,t),mix(F,R,t),'#b8a024',.5,'3 1');
}
line(L,F,dark,1);
line(F,R,dark,1);
poly([[422,128],[428,126],[503,157],[498,160]],'#f0e65a',dark);
line([424,128],[500,159],'#b49c1c',2,'.7 3');

// penthouse
bar(309,131,145,5,'#00f0f0');
bar(311,132,144,1,'#f0e65a');
poly([[322,137],[328,137],[330,143],[336,145],[343,149],[343,158],[334,155],[329,152],[326,149],[322,149]],'#00f4f4');
poly([[343,152],[352,154],[355,157],[362,160],[370,161],[370,171],[363,168],[357,167],[350,164],[343,162]],'#00f4f4');
poly([[325,138],[384,163],[460,150],[455,146],[380,150]],'#00f4f4');
[[377,160,175,5],[402,157,172,5],[426,153,168,5],[438,151,160,4],[450,150,165,5]].forEach(c=>{
	bar(c[0],c[1],c[2],c[3],'#00f0f0');
	bar(c[0]+2,c[1]+1,c[2]-1,1,'#f0e65a');
});
line([309,125],[386,113],'#b08a10',2);
poly([[302,127],[387,114],[463,148],[380,161]],'#ff80ff');
let seed=7;
for(let i=0;i<170;i++){
	seed=(seed*73+41)%9973;
	let a=(seed%97)/97;
	seed=(seed*73+41)%9973;
	let b=(seed%89)/89;
	b=i%2?1-b*b*.4:b*b*.12;
	let p=mix(mix([304,127],[386,115],a),mix([378,160],[460,148],a),b);
	out.push(`<rect x="${p[0]}" y="${p[1]}" width="1.200" height="1" fill="#30e0f0"/>`);
}

// origin mark
out.push('<path d="M155 474l8-2 5 5-7 2zM161 479l8-2 2 3 21-4 10 0-8 4-23 3zM163 474l-2 3" fill="none" stroke="#a4cca4" stroke-width=".8"/>');

// callout arrow
poly([[223,170],[227,169.500],[229,179.500],[225,180]],'#f80000');
poly([[229,169],[235,168],[237,178.500],[231,179]],'#f80000');
poly([[238,168],[294,160.500],[293,154.500],[320,161],[296,175],[295,170],[240,178]],'#f80000');

model.innerHTML=out.join('');
```
